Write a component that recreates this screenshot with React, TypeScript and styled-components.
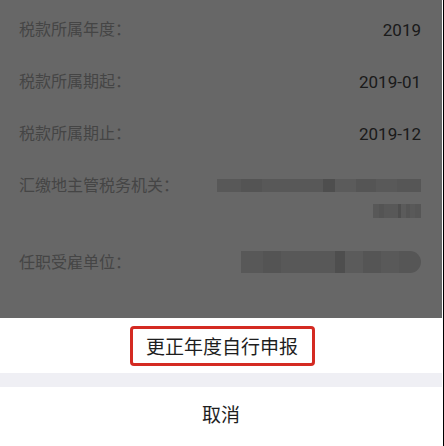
import styled, { createGlobalStyle } from 'styled-components'

const GlobalStyle = createGlobalStyle`
  html, body {
    margin: 0;
    padding: 0;
    background: #fff;
    overflow: hidden;
  }
  body {
    font-family: Roboto, "Noto Sans CJK SC", sans-serif;
  }
`

const Frame = styled.div`
  width: 443px;
  height: 446px;
  border-right: 1px solid #000;
  background: #fff;
`

const Screen = styled.div`
  position: relative;
  width: 442px;
  height: 446px;
  overflow: hidden;
  background: #fff;
`

const List = styled.div`
  display: flex;
  flex-direction: column;
  padding-top: 4px;
`

const Row = styled.div<{ $pb?: number }>`
  display: flex;
  justify-content: space-between;
  align-items: flex-start;
  padding: 15px 21px ${(p) => p.$pb ?? 15}px 19px;
  line-height: 22px;
`

const Label = styled.span`
  font-size: 16px;
  color: #ababab;
  white-space: nowrap;
`

const Value = styled.div`
  display: flex;
  flex-direction: column;
  align-items: flex-end;
  gap: 9px;
  font-size: 17px;
  color: #444;
`

// mosaic over private text
const Redacted = styled.span<{ $w: number; $h?: number; $round?: boolean }>`
  display: block;
  width: ${(p) => p.$w}px;
  height: ${(p) => p.$h || 13}px;
  margin-top: ${(p) => (22 - (p.$h || 13)) / 2 - 1}px;
  border-radius: ${(p) => (p.$round ? '0 11px 11px 0' : '0')};
  background: linear-gradient(
    90deg,
    #d9d9d9 0 12%,
    #cfcfcf 12% 22%,
    #dadada 22% 52%,
    #c2c2c2 52% 58%,
    #e0e0e0 58% 68%,
    #d2d2d2 68% 78%,
    #dcdcdc 78% 88%,
    #d4d4d4 88% 100%
  );
`

const Mask = styled.div`
  position: absolute;
  inset: 0;
  background: rgba(0, 0, 0, 0.596);
`

const Sheet = styled.div`
  position: absolute;
  left: 0;
  right: 0;
  bottom: 0;
  display: flex;
  flex-direction: column;
  background: #efeff4;
`

const SheetItem = styled.div<{ $h: number }>`
  display: flex;
  align-items: center;
  justify-content: center;
  height: ${(p) => p.$h}px;
  background: #fff;
  color: #1e1e1e;
  font-size: 19px;
`

const Gap = styled.div`
  height: 14px;
`

const Highlight = styled.span`
  display: inline-flex;
  align-items: center;
  justify-content: center;
  width: 185px;
  height: 40px;
  box-sizing: border-box;
  border: 3px solid #d42a22;
  border-radius: 4px;
  margin-left: 2px;
`

const CancelText = styled.span`
  padding-bottom: 7px;
`

const App = () => {
  return (
    <Frame>
      <GlobalStyle />
      <Screen>
        <List>
          <Row>
            <Label>税款所属年度：</Label>
            <Value>2019</Value>
          </Row>
          <Row>
            <Label>税款所属期起：</Label>
            <Value>2019-01</Value>
          </Row>
          <Row>
            <Label>税款所属期止：</Label>
            <Value>2019-12</Value>
          </Row>
          <Row $pb={19}>
            <Label>汇缴地主管税务机关：</Label>
            <Value>
              <Redacted $w={204} />
              <Redacted $w={48} $h={14} />
            </Value>
          </Row>
          <Row $pb={27}>
            <Label>任职受雇单位：</Label>
            <Value>
              <Redacted $w={180} $h={22} $round />
            </Value>
          </Row>
          <Row>
            <Label>纳税人识别号：</Label>
            <Value>
              <Redacted $w={160} />
            </Value>
          </Row>
        </List>
        <Mask />
        <Sheet>
          <SheetItem $h={55}>
            <Highlight>更正年度自行申报</Highlight>
          </SheetItem>
          <Gap />
          <SheetItem $h={59}>
            <CancelText>取消</CancelText>
          </SheetItem>
        </Sheet>
      </Screen>
    </Frame>
  )
}

export default App
